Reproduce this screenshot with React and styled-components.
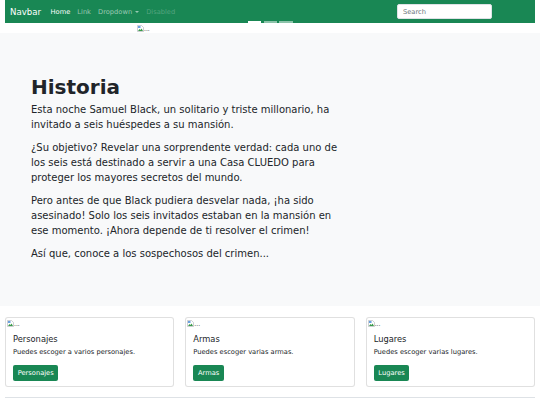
import React from 'react';
import styled, { createGlobalStyle } from 'styled-components';

const GlobalStyle = createGlobalStyle`
  body {
    margin: 0;
    background: #fff;
    color: #212529;
    font-family: "DejaVu Sans", "Noto Sans", sans-serif;
  }
`;

const Navbar = styled.nav`
  display: flex;
  align-items: center;
  height: 23px;
  margin: 0 5px;
  padding: 0 5px;
  background: #198754;
  box-sizing: border-box;
`;

const Brand = styled.a`
  font-size: 8.6px;
  color: #fff;
  margin-right: 6px;
  text-decoration: none;
`;

const NavList = styled.ul`
  display: flex;
  list-style: none;
  margin: 0;
  padding: 0;
  flex: 1;
`;

const NavLink = styled.a`
  display: flex;
  align-items: center;
  gap: 3px;
  padding: 0 3.5px;
  font-size: 6.7px;
  text-decoration: none;
  color: ${p => p.$active ? '#fff' : p.$disabled ? 'rgba(255,255,255,0.25)' : 'rgba(255,255,255,0.55)'};
`;

const Caret = styled.span`
  width: 0;
  height: 0;
  border-left: 2px solid transparent;
  border-right: 2px solid transparent;
  border-top: 2px solid rgba(255,255,255,0.55);
`;

const SearchInput = styled.input`
  width: 95px;
  height: 15px;
  box-sizing: border-box;
  margin-right: 38px;
  padding: 0 5px;
  border: 1px solid #dee2e6;
  border-radius: 2px;
  font-family: inherit;
  font-size: 6.7px;
  color: #212529;
  &::placeholder { color: #6c757d; }
`;

const Carousel = styled.div`
  position: relative;
  display: flex;
  align-items: flex-start;
  height: 10px;
  padding-left: 137px;
  padding-top: 1px;
  box-sizing: border-box;
`;

const Indicators = styled.div`
  position: absolute;
  top: -2px;
  left: 248px;
  display: flex;
  gap: 2.3px;
  z-index: 2;
`;

const Indicator = styled.span`
  width: 13.4px;
  height: 1.5px;
  background: #fff;
  opacity: ${p => p.$active ? 1 : 0.5};
`;

const Broken = styled.span`
  display: flex;
  align-items: flex-end;
  height: 8px;
  font-size: 6px;
  line-height: 6px;
  color: #212529;
  svg { display: block; flex: none; }
`;

const Hero = styled.section`
  background: #f8f9fa;
  padding: 42px 31px 37px;
`;

const Title = styled.h1`
  margin: 0 0 3px;
  font-size: 20px;
  line-height: 24px;
  font-weight: 700;
`;

const Lead = styled.p`
  max-width: 317px;
  margin: 0 0 8px;
  font-size: 10px;
  line-height: 15px;
`;

const Cards = styled.div`
  display: grid;
  grid-template-columns: repeat(3, 1fr);
  gap: 11px;
  padding: 11px 5px 0;
`;

const Card = styled.div`
  height: 70px;
  box-sizing: border-box;
  border: 1px solid rgba(0,0,0,0.12);
  border-radius: 3px;
  background: #fff;
  display: flex;
  flex-direction: column;
`;

const CardImg = styled.div`
  display: flex;
  height: 9px;
  padding: 1px 0 0 1px;
  box-sizing: border-box;
`;

const CardBody = styled.div`
  padding: 7px 7px 7px;
`;

const CardTitle = styled.h5`
  margin: 0 0 3px;
  font-size: 8.3px;
  line-height: 10px;
  font-weight: 500;
`;

const CardText = styled.p`
  margin: 0 0 3px;
  font-size: 6.7px;
  line-height: 10px;
`;

const Button = styled.a`
  display: inline-block;
  padding: 3px 4.7px;
  font-size: 6.7px;
  line-height: 10px;
  color: #fff;
  background: #198754;
  border-radius: 2px;
  text-decoration: none;
`;

const Footer = styled.footer`
  margin: 10px 5px 0;
  border-top: 1px solid #dee2e6;
`;

const BrokenImage = () => (
  <Broken>
    <svg width="7" height="7" viewBox="0 0 14 14">
      <path d="M1 1h8l4 4v8H1z" fill="#fff" stroke="#9aa0a6" strokeWidth="1" />
      <path d="M2 12l3-4 2 2 2-3 3 5z" fill="#3a9a4a" />
      <rect x="2" y="2" width="5" height="4" fill="#6aa0e0" />
    </svg>
    <span>...</span>
  </Broken>
);

const cards = [
  { title: 'Personajes', text: 'Puedes escoger a varios personajes.' },
  { title: 'Armas', text: 'Puedes escoger varias armas.' },
  { title: 'Lugares', text: 'Puedes escoger varias lugares.' },
];

export default function App() {
  return (
    <>
      <GlobalStyle />
      <Navbar>
        <Brand>Navbar</Brand>
        <NavList>
          <li><NavLink $active>Home</NavLink></li>
          <li><NavLink>Link</NavLink></li>
          <li><NavLink>Dropdown <Caret /></NavLink></li>
          <li><NavLink $disabled>Disabled</NavLink></li>
        </NavList>
        <SearchInput placeholder="Search" />
      </Navbar>
      <Carousel>
        <Indicators>
          <Indicator $active />
          <Indicator />
          <Indicator />
        </Indicators>
        <BrokenImage />
      </Carousel>
      <Hero>
        <Title>Historia</Title>
        <Lead>Esta noche Samuel Black, un solitario y triste millonario, ha invitado a seis huéspedes a su mansión.</Lead>
        <Lead>¿Su objetivo? Revelar una sorprendente verdad: cada uno de los seis está destinado a servir a una Casa CLUEDO para proteger los mayores secretos del mundo.</Lead>
        <Lead>Pero antes de que Black pudiera desvelar nada, ¡ha sido asesinado! Solo los seis invitados estaban en la mansión en ese momento. ¡Ahora depende de ti resolver el crimen!</Lead>
        <Lead>Así que, conoce a los sospechosos del crimen...</Lead>
      </Hero>
      <Cards>
        {cards.map(c => (
          <Card key={c.title}>
            <CardImg><BrokenImage /></CardImg>
            <CardBody>
              <CardTitle>{c.title}</CardTitle>
              <CardText>{c.text}</CardText>
              <Button>{c.title}</Button>
            </CardBody>
          </Card>
        ))}
      </Cards>
      <Footer />
    </>
  );
}
